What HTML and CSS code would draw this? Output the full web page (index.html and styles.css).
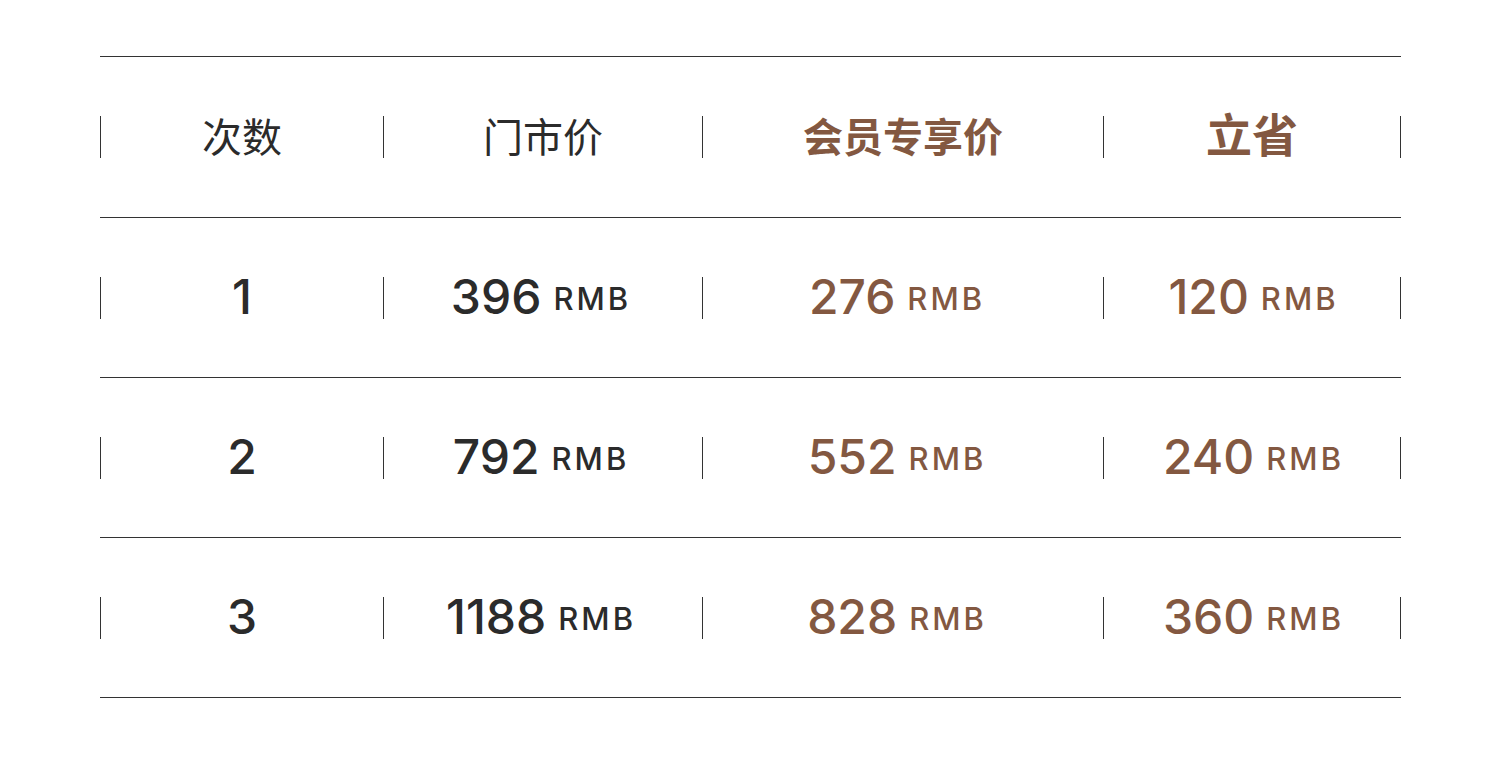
FILE: index.html
```html
<!DOCTYPE html>
<html lang="zh">
<head>
<meta charset="utf-8">
<title>价格表</title>
<link rel="stylesheet" href="styles.css">
</head>
<body>
<div class="table">
  <div class="row head">
    <div class="cell c1"><span class="hd">次数</span></div>
    <div class="cell c2"><span class="hd">门市价</span></div>
    <div class="cell c3"><span class="hd hd-brown">会员专享价</span></div>
    <div class="cell c4 last"><span class="hd hd-big">立省</span></div>
  </div>
  <div class="row">
    <div class="cell c1"><span class="num">1</span></div>
    <div class="cell c2 price"><span class="num">396</span><span class="unit">RMB</span></div>
    <div class="cell c3 price brown"><span class="num">276</span><span class="unit">RMB</span></div>
    <div class="cell c4 last brown"><span class="num">120</span><span class="unit">RMB</span></div>
  </div>
  <div class="row">
    <div class="cell c1"><span class="num">2</span></div>
    <div class="cell c2 price"><span class="num">792</span><span class="unit">RMB</span></div>
    <div class="cell c3 price brown"><span class="num">552</span><span class="unit">RMB</span></div>
    <div class="cell c4 last brown"><span class="num">240</span><span class="unit">RMB</span></div>
  </div>
  <div class="row">
    <div class="cell c1"><span class="num">3</span></div>
    <div class="cell c2 price"><span class="num">1188</span><span class="unit">RMB</span></div>
    <div class="cell c3 price brown"><span class="num">828</span><span class="unit">RMB</span></div>
    <div class="cell c4 last brown"><span class="num">360</span><span class="unit">RMB</span></div>
  </div>
</div>
</body>
</html>
```

FILE: styles.css
```css
html, body {
  margin: 0;
  padding: 0;
  background: #ffffff;
}

body {
  font-family: "Inter", "Noto Sans CJK SC", sans-serif;
  color: #2b2b2b;
}

.table {
  margin: 56px 0 0 100px;
  width: 1301px;
  border-top: 1px solid #333333;
}

.row {
  display: flex;
  align-items: center;
  height: 159px;
  border-bottom: 1px solid #333333;
}

.row.head {
  height: 160px;
}

.cell {
  height: 42px;
  border-left: 1px solid #333333;
  display: flex;
  align-items: center;
  justify-content: center;
  box-sizing: border-box;
}

.cell.last {
  border-right: 1px solid #333333;
}

.c1 { width: 283px; }
.c2 { width: 319px; }
.c3 { width: 401px; }
.c4 { width: 298px; }

.c2.price { padding-right: 7px; }
.c3.price { padding-right: 15px; }

.hd {
  font-family: "Noto Sans CJK SC", sans-serif;
  font-size: 40px;
  font-weight: 400;
  line-height: 1;
  color: #2b2b2b;
  position: relative;
  top: -2px;
}

.hd-brown {
  color: #835841;
  font-weight: 700;
}

.hd-big {
  color: #835841;
  font-weight: 700;
  font-size: 46px;
  top: -5px;
}

.brown {
  color: #835841;
}

.num {
  font-family: "Inter", sans-serif;
  font-size: 48px;
  font-weight: 500;
  line-height: 1;
  letter-spacing: 0;
  position: relative;
  top: -1px;
}

.unit {
  font-family: "Inter", sans-serif;
  font-size: 31px;
  font-weight: 500;
  line-height: 1;
  margin-left: 12px;
  letter-spacing: 3px;
  margin-right: -3px;
  position: relative;
  top: 1px;
}
```
